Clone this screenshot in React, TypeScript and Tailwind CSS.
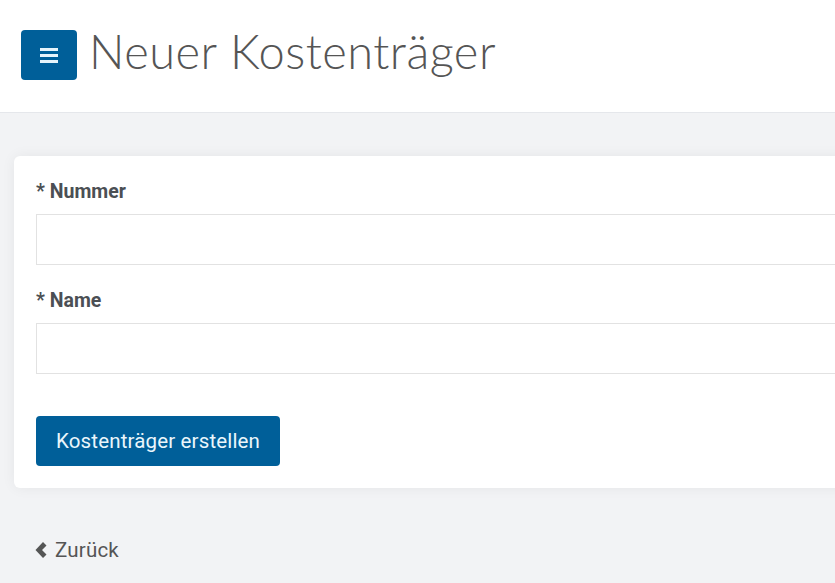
function Header() {
    return (
        <header className="h-[113px] bg-white border-b border-[#e5e7eb] flex items-center pl-[21px] pb-[2px]">
            <button className="w-[56px] h-[50px] rounded-[4px] bg-[#005f99] flex flex-col items-center justify-center gap-[3px]">
                <span className="block w-[18px] h-[3px] bg-[#e6f4fb]"></span>
                <span className="block w-[18px] h-[3px] bg-[#e6f4fb]"></span>
                <span className="block w-[18px] h-[3px] bg-[#e6f4fb]"></span>
            </button>
            <h1 className="ml-[12px] text-[47px] font-light text-[#555555] tracking-[0.5px] leading-none font-['Lato',sans-serif] mt-[-8px]">
                Neuer Kostenträger
            </h1>
        </header>
    );
}

function Field({ label }: { label: string }) {
    return (
        <div className="mb-[23px]">
            <label className="block text-[19.5px] font-bold text-[#4b4f54] leading-[22px] pt-[2px] mb-[11px]">* {label}</label>
            <input className="block w-full h-[51px] border border-[#e2e2e2] bg-white outline-none" />
        </div>
    );
}

export default function App() {
    return (
        <div className="w-[835px] h-[583px] overflow-hidden bg-[#f2f3f5] font-['Roboto',sans-serif]">
            <div className="w-[1200px]">
                <Header />
                <main className="pt-[43px] pl-[14px]">
                    <div className="bg-white rounded-[6px] shadow-[0_0_14px_rgba(0,0,0,0.06)] pt-[23px] pb-[22px] pl-[22px] pr-[22px]">
                        <Field label="Nummer" />
                        <Field label="Name" />
                        <div className="pt-[19px]">
                            <button className="h-[50px] px-[20px] rounded-[4px] bg-[#005f99] text-[#eaf6fc] text-[20.5px] tracking-[0.15px] leading-none">
                                Kostenträger erstellen
                            </button>
                        </div>
                    </div>
                    <a href="#" className="mt-[47px] ml-[20px] inline-flex items-center gap-[8px] text-[20.5px] tracking-[0.2px] text-[#555555]">
                        <svg width="13" height="18" viewBox="0 0 13 18" fill="#555555">
                            <path d="M9 1 L12.5 4.5 L8 9 L12.5 13.5 L9 17 L1.5 9 Z" />
                        </svg>
                        Zurück
                    </a>
                </main>
            </div>
        </div>
    );
}
